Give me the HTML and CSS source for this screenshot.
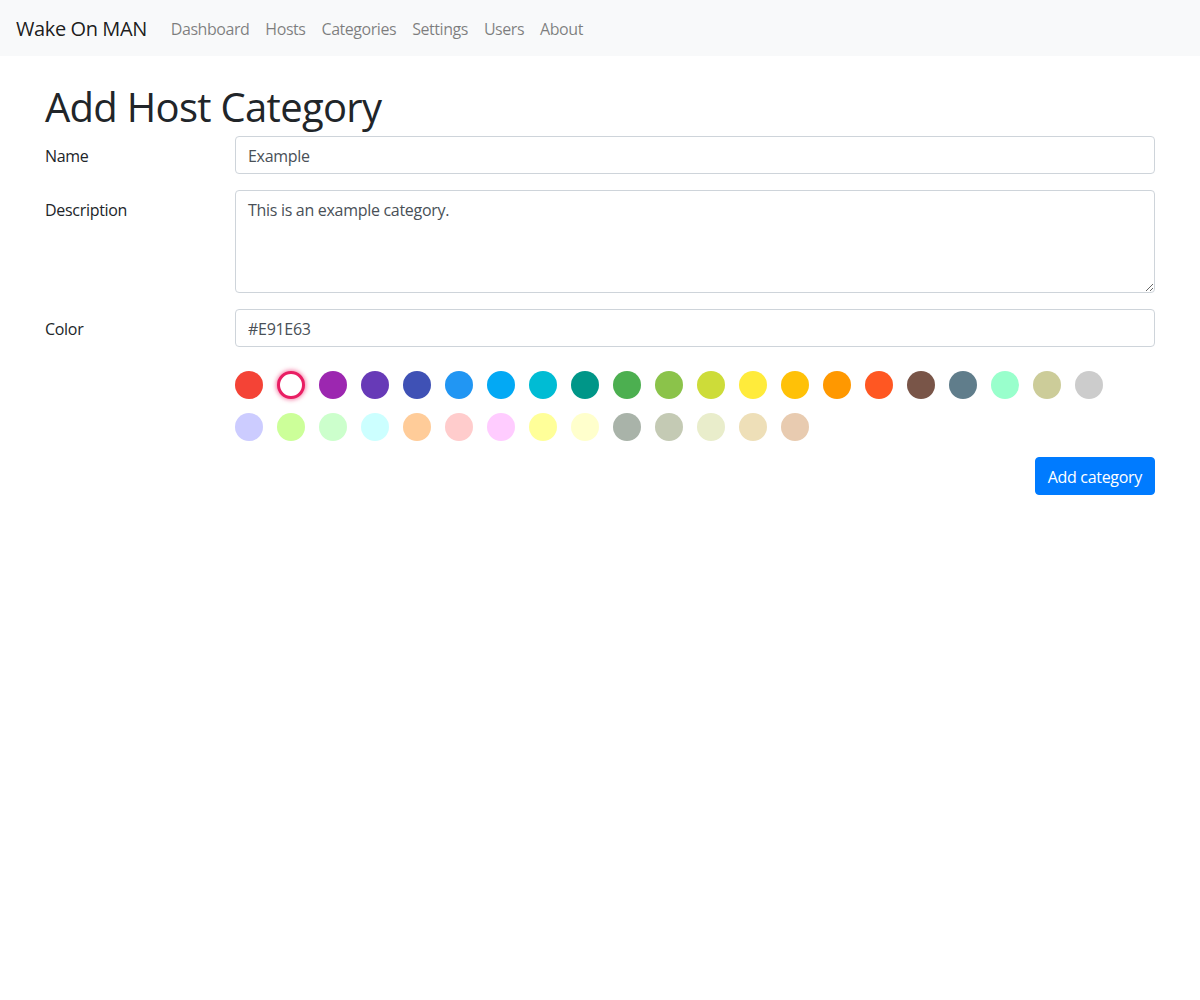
FILE: index.html
```html
<!DOCTYPE html>
<html lang="en">
<head>
<meta charset="utf-8">
<title>Add Host Category - Wake On MAN</title>
<link rel="stylesheet" href="styles.css">
</head>
<body>
<nav class="navbar">
  <a class="brand" href="#">Wake On MAN</a>
  <ul class="nav">
    <li><a class="nav-link" href="#">Dashboard</a></li>
    <li><a class="nav-link" href="#">Hosts</a></li>
    <li><a class="nav-link" href="#">Categories</a></li>
    <li><a class="nav-link" href="#">Settings</a></li>
    <li><a class="nav-link" href="#">Users</a></li>
    <li><a class="nav-link" href="#">About</a></li>
  </ul>
</nav>
<main class="container">
  <h1 class="title">Add Host Category</h1>
  <form class="form">
    <div class="form-row">
      <label class="form-label" for="name">Name</label>
      <div class="form-field"><input class="form-control" id="name" type="text" value="Example"></div>
    </div>
    <div class="form-row">
      <label class="form-label" for="desc">Description</label>
      <div class="form-field"><textarea class="form-control textarea" id="desc">This is an example category.</textarea></div>
    </div>
    <div class="form-row">
      <label class="form-label" for="color">Color</label>
      <div class="form-field"><input class="form-control" id="color" type="text" value="#E91E63"></div>
    </div>
    <div class="form-row">
      <div class="form-label"></div>
      <div class="form-field swatches">
        <span class="swatch" style="background:#f44336"></span>
        <span class="swatch selected"></span>
        <span class="swatch" style="background:#9c27b0"></span>
        <span class="swatch" style="background:#673ab7"></span>
        <span class="swatch" style="background:#3f51b5"></span>
        <span class="swatch" style="background:#2196f3"></span>
        <span class="swatch" style="background:#03a9f4"></span>
        <span class="swatch" style="background:#00bcd4"></span>
        <span class="swatch" style="background:#009688"></span>
        <span class="swatch" style="background:#4caf50"></span>
        <span class="swatch" style="background:#8bc34a"></span>
        <span class="swatch" style="background:#cddc39"></span>
        <span class="swatch" style="background:#ffeb3b"></span>
        <span class="swatch" style="background:#ffc107"></span>
        <span class="swatch" style="background:#ff9800"></span>
        <span class="swatch" style="background:#ff5722"></span>
        <span class="swatch" style="background:#795548"></span>
        <span class="swatch" style="background:#607d8b"></span>
        <span class="swatch" style="background:#99ffcc"></span>
        <span class="swatch" style="background:#cccc99"></span>
        <span class="swatch" style="background:#cccccc"></span>
        <span class="swatch" style="background:#ccccff"></span>
        <span class="swatch" style="background:#ccff99"></span>
        <span class="swatch" style="background:#ccffcc"></span>
        <span class="swatch" style="background:#ccffff"></span>
        <span class="swatch" style="background:#ffcc99"></span>
        <span class="swatch" style="background:#ffcccc"></span>
        <span class="swatch" style="background:#ffccff"></span>
        <span class="swatch" style="background:#ffff99"></span>
        <span class="swatch" style="background:#ffffcc"></span>
        <span class="swatch" style="background:#a9b3a9"></span>
        <span class="swatch" style="background:#c4cab4"></span>
        <span class="swatch" style="background:#e9edcb"></span>
        <span class="swatch" style="background:#eedfb8"></span>
        <span class="swatch" style="background:#e8cbb0"></span>
      </div>
    </div>
    <div class="actions">
      <button class="btn-primary" type="button">Add category</button>
    </div>
  </form>
</main>
</body>
</html>
```
FILE: styles.css
```css
* { box-sizing: border-box; }
html, body {
  margin: 0;
  font-family: "Open Sans", "Noto Sans", sans-serif;
  font-size: 16px;
  line-height: 1.5;
  color: #212529;
  background: #fff;
}
.navbar {
  display: flex;
  align-items: center;
  height: 56px;
  padding: 8px 16px;
  background: #f8f9fa;
}
.brand {
  font-size: 20px;
  line-height: 30px;
  padding: 6px 0 4px;
  margin-right: 16px;
  color: rgba(0,0,0,.9);
  text-decoration: none;
  letter-spacing: -0.4px;
}
.nav {
  display: flex;
  list-style: none;
  margin: 0;
  padding: 0;
}
.nav-link {
  display: block;
  padding: 9px 8px 7px;
  color: rgba(0,0,0,.5);
  text-decoration: none;
  letter-spacing: -0.45px;
}
.container {
  width: 1140px;
  margin: 0 auto;
  padding: 0 15px;
}
.title {
  margin: 27px 0 5px;
  font-size: 40px;
  line-height: 48px;
  font-weight: 400;
  letter-spacing: -0.7px;
}
.form-row {
  display: flex;
  margin-bottom: 16px;
}
.form-label {
  width: 190px;
  flex: 0 0 190px;
  padding-top: 8px;
  padding-bottom: 6px;
  letter-spacing: -0.3px;
}
.form-field {
  flex: 1;
}
.form-control {
  display: block;
  width: 100%;
  height: 38px;
  padding: 7px 12px 5px;
  font-family: inherit;
  font-size: 16px;
  line-height: 24px;
  color: #495057;
  background: #fff;
  border: 1px solid #ced4da;
  border-radius: 4px;
  letter-spacing: -0.3px;
}
.textarea {
  height: 103px;
  resize: vertical;
}
.swatches {
  display: flex;
  flex-wrap: wrap;
  padding-top: 8px;
}
.swatch {
  display: block;
  width: 28px;
  height: 28px;
  border-radius: 50%;
  margin: 0 14px 14px 0;
}
.swatch.selected {
  background: #fff;
  border: 3px solid #e91e63;
  box-shadow: 0 0 4px 1px rgba(233,30,99,.55);
}
.actions {
  display: flex;
  justify-content: flex-end;
  margin-top: -14px;
}
.btn-primary {
  height: 38px;
  padding: 7px 12px 5px;
  font-family: inherit;
  font-size: 16px;
  line-height: 24px;
  color: #fff;
  background: #007bff;
  border: 1px solid #007bff;
  border-radius: 4px;
  letter-spacing: -0.3px;
}
```
